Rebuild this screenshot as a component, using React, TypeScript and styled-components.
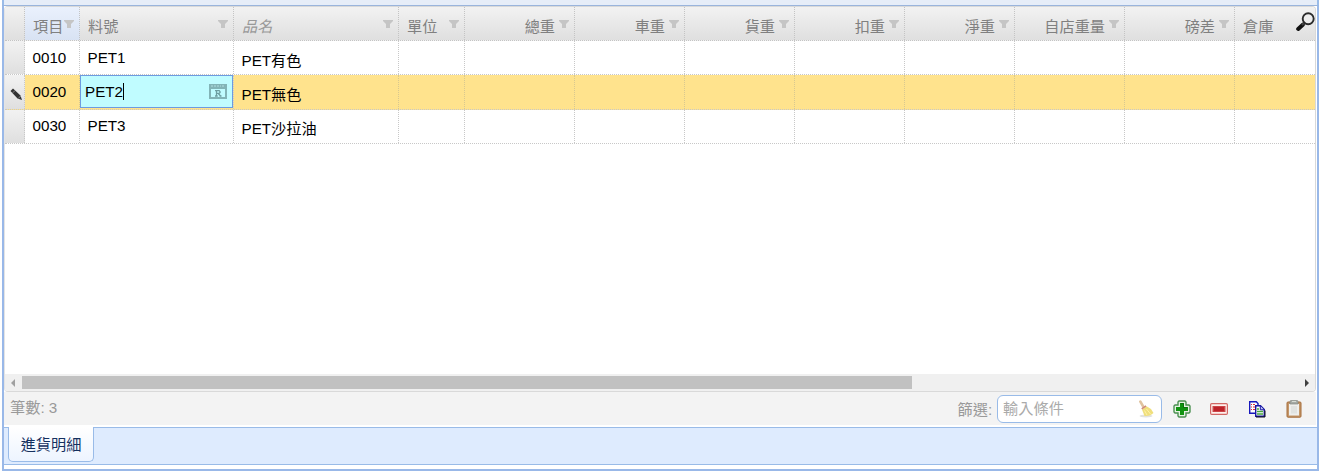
import React from "react";
import styled, { createGlobalStyle, css } from "styled-components";

const GlobalStyle = createGlobalStyle`
  * { box-sizing: border-box; }
  body {
    margin: 0;
    background: #fff;
    overflow: hidden;
    font-family: "Liberation Sans", "Noto Sans CJK TC", sans-serif;
    font-size: 15.2px;
  }
`;

const Page = styled.div`
  width: 1322px;
  height: 471px;
  display: flex;
  flex-direction: column;
  padding: 0 3px 0 2px;
  background: #fff;
`;

const TopStrip = styled.div`
  height: 5px;
  flex: none;
  background: #e6edf8;
  border-left: 2px solid #99bbe8;
  border-right: 2px solid #99bbe8;
`;

const Frame = styled.div`
  flex: 1;
  display: flex;
  flex-direction: column;
  border: 2px solid #99b8e8;
  border-top: 1px solid #99b4dc;
`;

const Grid = styled.div`
  height: 386px;
  flex: none;
  display: flex;
  flex-direction: column;
  margin-right: 1px;
  border: 1px solid #d9d9d9;
  border-left-color: #e4e4e4;
  border-radius: 4px;
  overflow: hidden;
`;

const columnTemplate = "20px 55px 154px 165px 66px repeat(7, 110px) 1fr";

const HeaderRow = styled.div`
  display: grid;
  grid-template-columns: ${columnTemplate};
  height: 34px;
  flex: none;
  background: linear-gradient(#f2f2f2, #dfdfdf);
  border-bottom: 1px dotted #c4c4c4;
`;

const HeaderCell = styled.div<{ $align?: "right"; $italic?: boolean; $sorted?: boolean; $last?: boolean }>`
  display: flex;
  align-items: center;
  justify-content: ${(p) => (p.$align === "right" ? "flex-end" : "space-between")};
  gap: 4px;
  padding: 7px 5px 0 8px;
  border-right: 1px dotted #c4c4c4;
  color: ${(p) => (p.$italic ? "#999" : "#808080")};
  font-style: ${(p) => (p.$italic ? "italic" : "normal")};
  line-height: 22px;
  white-space: nowrap;
  ${(p) => p.$sorted && css`background: linear-gradient(#eaf1fd, #d8e2f3); gap: 0;`}
  ${(p) => p.$last && css`border-right: 0; padding-right: 0;`}
`;

const FunnelSvg = styled.svg`
  width: 10px;
  height: 8px;
  flex: none;
  margin-top: -7px;
`;

const SearchSvg = styled.svg`
  width: 19px;
  height: 20px;
  flex: none;
  align-self: flex-start;
  margin-top: -2px;
`;

const Row = styled.div<{ $selected?: boolean }>`
  display: grid;
  grid-template-columns: ${columnTemplate};
  height: ${(p) => (p.$selected ? 35 : 34)}px;
  flex: none;
  background: ${(p) => (p.$selected ? "#ffe38d" : "#fff")};
  border-bottom: 1px dotted #c8c8c8;

  &:last-of-type { margin-top: 0; }
`;

const Marker = styled.div`
  display: flex;
  align-items: center;
  padding: 5px 0 0 5px;
  background: linear-gradient(#f2f2f2, #dfdfdf);
  border-right: 1px dotted #c8c8c8;
`;

const Cell = styled.div<{ $low?: boolean; $last?: boolean; $selected?: boolean; $raised?: boolean }>`
  padding: ${(p) => (p.$low ? 9 : 6) - (p.$raised ? 1 : 0)}px 0 0 7.5px;
  border-right: ${(p) => (p.$last ? "0" : `1px dotted ${p.$selected ? "#d8c890" : "#c8c8c8"}`)};
  color: #000;
  line-height: 21px;
  white-space: nowrap;
`;

const EditorCell = styled.div`
  border-right: 1px dotted #c8c8c8;
  height: 34px;
`;

const Editor = styled.div`
  display: flex;
  align-items: center;
  height: 33px;
  padding: 0 5px 0 4px;
  background: #c0fcff;
  border: 1px solid #6d9be0;
  color: #000;
`;

const Caret = styled.span`
  width: 1px;
  height: 17px;
  background: #000;
`;

const LookupSvg = styled.svg`
  width: 18px;
  height: 15px;
  margin-left: auto;
`;

const Blank = styled.div`
  flex: 1;
  background: #fff;
`;

const ScrollBar = styled.div`
  display: flex;
  align-items: center;
  justify-content: space-between;
  height: 17px;
  flex: none;
  padding: 0 6px 0 6px;
  background: #f0f0f0;
`;

const ScrollThumb = styled.div`
  width: 890px;
  height: 13px;
  margin: 0 auto 0 7px;
  background: #c1c1c1;
`;

const Arrow = styled.svg`
  width: 4px;
  height: 8px;
  flex: none;
`;

const Footer = styled.div`
  display: flex;
  align-items: center;
  height: 33px;
  flex: none;
  margin-right: 1px;
  padding: 0 13px 2px 6px;
  background: #f3f3f3;
  color: #999;
`;

const Count = styled.div`
  margin-right: auto;
  line-height: 22px;
`;

const FilterBox = styled.div`
  display: flex;
  align-items: center;
  justify-content: space-between;
  width: 165px;
  height: 28px;
  margin: 2px 11px 0 5px;
  padding: 0 6px 0 5px;
  background: #fff;
  border: 1px solid #99bbe8;
  border-radius: 6px;
  color: #aaa;
  line-height: 22px;
`;

const Tools = styled.div`
  display: flex;
  align-items: center;
  gap: 19.3px;
  margin-top: 2px;
`;

const Icon = styled.svg`
  display: block;
  width: 18px;
  height: 18px;
`;

const TabBar = styled.div`
  display: flex;
  align-items: flex-start;
  height: 38px;
  flex: none;
  margin-top: 2px;
  padding-left: 4px;
  background: #deebfe;
  border-top: 1px solid #99bbe8;
  border-bottom: 1px solid #99bbe8;
`;

const Tab = styled.div`
  display: flex;
  align-items: center;
  justify-content: center;
  width: 86px;
  height: 35px;
  margin-top: -1px;
  padding-bottom: 2px;
  background: linear-gradient(#fff, #edf4ff);
  border: 1px solid #99bbe8;
  border-top: 0;
  border-radius: 0 0 5px 5px;
  color: #15305f;
`;

const Funnel = () => (
  <FunnelSvg viewBox="0 0 10 8">
    <path d="M0 0H10V1L7 4V8H3V4L0 1Z" fill="#c5c5c5" />
  </FunnelSvg>
);

const Pencil = () => (
  <svg width="13" height="13" viewBox="0 0 13 13">
    <path d="M.5 3L3 .5L10.5 7.5L12 12L7.5 10.5Z" fill="#333" />
    <path d="M2.8 4.8L5 2.5M8.5 10L11 7.8" stroke="#ddd" strokeWidth=".5" />
  </svg>
);

const Lookup = () => (
  <LookupSvg viewBox="0 0 18 15">
    <path d="M1 1H17V14H1Z" fill="none" stroke="#82b4b7" strokeWidth="2" />
    <path d="M1 3.5H17" stroke="#82b4b7" strokeWidth="3" />
    <path d="M2 2H12M13 2H16" stroke="#b1dfe1" strokeDasharray="2 1" />
    <path d="M7.5 12V6.7H10.3Q12 8 10.3 9.3H7.5M9.4 9.5L11.5 12M6 12H8.7M10.5 12H12.5M6 6.7H8" fill="none" stroke="#6c9ea1" strokeWidth="1.3" />
  </LookupSvg>
);

const Search = () => (
  <SearchSvg viewBox="0 0 19 20">
    <path d="M2.2 17L6.8 12.7" stroke="#111" strokeWidth="4" strokeLinecap="round" />
    <path d="M6 13L9 10" stroke="#444" strokeWidth="2" />
    <circle cx="12.2" cy="6.8" r="5.5" fill="#eee" fillOpacity=".6" stroke="#2b2b2b" strokeWidth="1.9" />
  </SearchSvg>
);

const Broom = () => (
  <Icon viewBox="0 0 18 18">
    <ellipse cx="9" cy="16" rx="6.5" ry="1.4" fill="#e2e2de" />
    <path d="M3.3 1.5L6.5 7" stroke="#e0c3a0" strokeWidth="2.5" strokeLinecap="round" />
    <path d="M5 9.5L9.5 6.2L14 9L16.5 13Q13 16.5 7.5 16Z" fill="#f0df7c" />
    <path d="M7.5 10.5L10 15M9.5 9L13.5 14" stroke="#fff2a8" />
    <path d="M4.7 8.9L9 5.8" stroke="#cf8a7a" strokeWidth="1.5" />
  </Icon>
);

const Add = () => (
  <Icon viewBox="0 0 18 18">
    <path d="M6 1H12L13 2V5H16L17 6V12L16 13H13V16L12 17H6L5 16V13H2L1 12V6L2 5H5V2Z" fill="#e5f1e2" stroke="#4c9052" strokeWidth="1.4" />
    <path d="M7 3H11V7H15V11H11V15H7V11H3V7H7Z" fill="#109310" />
    <path d="M7.5 3.5H10.5V7.5H14.5" fill="none" stroke="#08720c" />
  </Icon>
);

const Remove = () => (
  <Icon viewBox="0 0 18 18">
    <rect x=".6" y="3.6" width="16.8" height="10.8" rx="1.2" fill="#fff0ec" stroke="#d16764" strokeWidth="1.2" />
    <rect x="2.5" y="6" width="13" height="6" fill="#ca4547" />
    <rect x="4" y="7" width="10" height="4" fill="#bd2229" />
  </Icon>
);

const Copy = () => (
  <Icon viewBox="0 0 18 18">
    <path d="M1.7 1.7H8.3L10 3.5V13.3H1.7Z" fill="#fff" stroke="#1717bd" strokeWidth="1.4" />
    <path d="M3 4.5H4M5 4.5H7M3 7H4M5 7H7M3 9.5H4M5 9.5H7" stroke="#e12d38" strokeWidth="1.1" />
    <path d="M7.7 5.7H12.5L16.3 9.5V16.3H7.7Z" fill="#fff" stroke="#1616a2" strokeWidth="1.4" />
    <path d="M12.3 6V9.8H16" fill="#bec3fb" stroke="#1616a2" />
    <path d="M9 9H11M9 11.5H15M9 14H15" stroke="#45a43d" strokeWidth="1.3" />
    <path d="M8 17H17V10.5" fill="none" stroke="#111" />
  </Icon>
);

const Paste = () => (
  <Icon viewBox="0 0 18 18">
    <rect x="2" y="2" width="14" height="15.2" rx="1" fill="#c4976a" stroke="#a66c38" />
    <rect x="4" y="4" width="10" height="11.5" fill="#eeefed" />
    <path d="M6 6H12V13.5H6Z" fill="#e1e3e1" />
    <path d="M5 1.5Q5 .5 6 .5H12Q13 .5 13 1.5V4H5Z" fill="#a5aaa5" stroke="#858b84" strokeWidth=".7" />
    <path d="M7 1.5H11" stroke="#d6dbd4" />
  </Icon>
);

const numericHeaders = ["總重", "車重", "貨重", "扣重", "淨重", "自店重量", "磅差"];

const rows = [
  { no: "0010", code: "PET1", name: "PET有色" },
  { no: "0020", code: "PET2", name: "PET無色", editing: true },
  { no: "0030", code: "PET3", name: "PET沙拉油", raised: true },
];

export default function App() {
  return (
    <>
      <GlobalStyle />
      <Page>
        <TopStrip />
        <Frame>
          <Grid>
            <HeaderRow>
              <HeaderCell />
              <HeaderCell $sorted>項目<Funnel /></HeaderCell>
              <HeaderCell>料號<Funnel /></HeaderCell>
              <HeaderCell $italic>品名<Funnel /></HeaderCell>
              <HeaderCell>單位<Funnel /></HeaderCell>
              {numericHeaders.map((title) => (
                <HeaderCell key={title} $align="right">{title}<Funnel /></HeaderCell>
              ))}
              <HeaderCell $last>倉庫<Search /></HeaderCell>
            </HeaderRow>
            {rows.map((row) => (
              <Row key={row.no} $selected={row.editing}>
                <Marker>{row.editing && <Pencil />}</Marker>
                <Cell $selected={row.editing} $raised={row.raised}>{row.no}</Cell>
                {row.editing ? (
                  <EditorCell>
                    <Editor>{row.code}<Caret /><Lookup /></Editor>
                  </EditorCell>
                ) : (
                  <Cell $raised={row.raised}>{row.code}</Cell>
                )}
                <Cell $low $selected={row.editing} $raised={row.raised}>{row.name}</Cell>
                <Cell $selected={row.editing} />
                {numericHeaders.map((title) => (
                  <Cell key={title} $selected={row.editing} />
                ))}
                <Cell $last />
              </Row>
            ))}
            <Blank />
            <ScrollBar>
              <Arrow viewBox="0 0 4 8"><path d="M4 0V8L0 4Z" fill="#a0a0a0" /></Arrow>
              <ScrollThumb />
              <Arrow viewBox="0 0 4 8"><path d="M0 0V8L4 4Z" fill="#404040" /></Arrow>
            </ScrollBar>
          </Grid>
          <Footer>
            <Count>筆數: 3</Count>
            <span>篩選:</span>
            <FilterBox>輸入條件<Broom /></FilterBox>
            <Tools>
              <Add />
              <Remove />
              <Copy />
              <Paste />
            </Tools>
          </Footer>
          <TabBar>
            <Tab>進貨明細</Tab>
          </TabBar>
        </Frame>
      </Page>
    </>
  );
}
